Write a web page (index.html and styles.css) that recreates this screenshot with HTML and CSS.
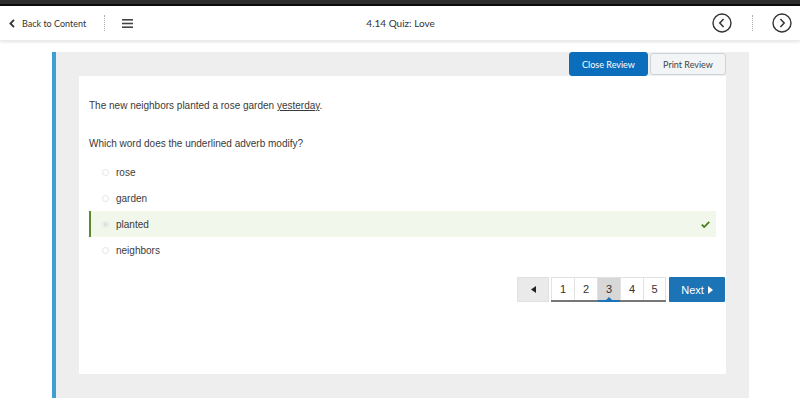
FILE: index.html
```html
<!DOCTYPE html>
<html>
<head>
<meta charset="utf-8">
<link rel="stylesheet" href="styles.css">
</head>
<body>
<div class="topbar"></div>
<header class="header">
  <div class="back">
    <svg class="chev" width="6" height="9" viewBox="0 0 6 9"><path d="M5 0.8 L1.4 4.5 L5 8.2" fill="none" stroke="#333" stroke-width="1.8"/></svg>
    <span>Back to Content</span>
  </div>
  <div class="sep"></div>
  <svg class="burger" width="11" height="9" viewBox="0 0 11 9"><rect x="0" y="0" width="11" height="1.6" fill="#444"/><rect x="0" y="3.7" width="11" height="1.6" fill="#444"/><rect x="0" y="7.4" width="11" height="1.6" fill="#444"/></svg>
  <div class="title">4.14 Quiz: Love</div>
  <svg class="circ" width="20" height="20" viewBox="0 0 20 20"><circle cx="10" cy="10" r="9" fill="none" stroke="#333" stroke-width="1.4"/><path d="M11.6 6 L7.8 10 L11.6 14" fill="none" stroke="#333" stroke-width="1.5"/></svg>
  <div class="sep sep2"></div>
  <svg class="circ" width="20" height="20" viewBox="0 0 20 20"><circle cx="10" cy="10" r="9" fill="none" stroke="#333" stroke-width="1.4"/><path d="M8.4 6 L12.2 10 L8.4 14" fill="none" stroke="#333" stroke-width="1.5"/></svg>
</header>
<main class="main">
  <section class="panel">
    <div class="tools">
      <button class="btn btn-primary">Close Review</button>
      <button class="btn btn-light">Print Review</button>
    </div>
    <div class="card">
      <p class="prompt">The new neighbors planted a rose garden <u>yesterday</u>.</p>
      <p class="question">Which word does the underlined adverb modify?</p>
      <ul class="options">
        <li class="opt"><span class="radio"></span><span>rose</span></li>
        <li class="opt"><span class="radio"></span><span>garden</span></li>
        <li class="opt sel"><span class="radio on"></span><span>planted</span>
          <svg class="check" width="9" height="7" viewBox="0 0 9 7"><path d="M0.8 3.6 L3.2 6 L8.2 0.8" fill="none" stroke="#4c7d1c" stroke-width="1.8"/></svg>
        </li>
        <li class="opt"><span class="radio"></span><span>neighbors</span></li>
      </ul>
      <nav class="pager">
        <button class="prev"><svg width="5" height="7" viewBox="0 0 5 7"><path d="M5 0 L0 3.5 L5 7 Z" fill="#222"/></svg></button>
        <div class="pages">
          <span class="pg">1</span><span class="pg">2</span><span class="pg cur">3</span><span class="pg">4</span><span class="pg">5</span>
        </div>
        <button class="next">Next <svg width="5" height="8" viewBox="0 0 5 8"><path d="M0 0 L5 4 L0 8 Z" fill="#fff"/></svg></button>
      </nav>
    </div>
  </section>
</main>
</body>
</html>
```
FILE: styles.css
```css
* { box-sizing: border-box; }
html, body { margin: 0; padding: 0; background: #fff; }
body { width: 800px; height: 409px; overflow: hidden; font-family: "Liberation Sans", Arial, sans-serif; color: #3a3a3a; }

.topbar { height: 6px; background: #2e2e2e; border-bottom: 2px solid #0d0d0d; }

.header {
  height: 35px;
  display: flex;
  align-items: center;
  background: #fff;
  box-shadow: 0 1px 3px rgba(0,0,0,0.12);
  border-bottom: 1px solid #ececec;
  font-family: Lato, "Liberation Sans", sans-serif;
  position: relative;
  z-index: 1;
}
.back { display: flex; align-items: center; padding-left: 9px; font-size: 9px; color: #333; }
.chev { margin-right: 7px; }
.sep { width: 0; height: 16px; border-left: 1px dotted #aaa; margin-left: 18px; }
.burger { margin-left: 17px; }
.title { flex: 1; text-align: center; font-size: 10px; color: #333; padding-right: 44px; }
.circ { display: block; }
.sep2 { margin-left: 20px; margin-right: 19px; }
.header .circ:last-child { margin-right: 8px; }

.main { padding-top: 11px; }
.panel {
  margin-left: 52px;
  width: 697px;
  height: 346px;
  background: #eeeeee;
  border-left: 4px solid #3e9fd3;
  padding: 0 23px 24px 23px;
  display: flex;
  flex-direction: column;
}
.tools { display: flex; justify-content: flex-end; gap: 2px; height: 24px; }
.btn {
  font-family: Lato, "Liberation Sans", sans-serif;
  font-size: 9px;
  border-radius: 3px;
  height: 24px;
  padding: 0;
  cursor: pointer;
}
.btn-primary { width: 79px; background: #0b6ebd; color: #fff; border: 1px solid #0b6ebd; }
.btn-light { width: 76px; height: 22px; margin-top: 1px; background: #f2f4f6; color: #444; border: 1px solid #cfd3d7; }

.card {
  flex: 1;
  background: #fff;
  padding: 23px 0 0 10px;
  display: flex;
  flex-direction: column;
}
.prompt { margin: 0; font-size: 10px; line-height: 14px; }
.question { margin: 24px 0 0 0; font-size: 10px; line-height: 14px; }
.options { list-style: none; margin: 8px 0 0 0; padding: 0; }
.opt {
  display: flex;
  align-items: center;
  height: 26px;
  width: 627px;
  font-size: 10px;
  padding-left: 11px;
  border-left: 2px solid transparent;
}
.radio {
  width: 7px; height: 7px;
  border: 1px solid #e3e3e3;
  border-radius: 50%;
  margin-right: 7px;
}
.radio.on { background: radial-gradient(circle, #ddd 1.5px, transparent 2px); }
.sel { background: #f1f7ea; border-left-color: #5a8a2c; }
.check { margin-left: auto; margin-right: 6px; }

.pager { display: flex; justify-content: flex-end; margin-top: 14px; margin-right: 1px; height: 25px; }
.prev {
  width: 32px; height: 25px; background: #eaeaea; border: 1px solid #e0e0e0; padding: 0;
  display: flex; align-items: center; justify-content: center; margin-right: 2px;
}
.pages { display: flex; border-bottom: 2px solid #777; height: 25px; background: #fff; }
.pg {
  width: 23px; height: 23px;
  display: flex; align-items: center; justify-content: center;
  font-size: 11px; color: #333;
  border: 1px solid #e2e2e2; border-right: none; border-bottom: none;
  position: relative;
}
.pg:last-child { border-right: 1px solid #e2e2e2; }
.pg.cur { background: #d7d7d7; }
.pg.cur::after {
  content: ""; position: absolute; left: 0; right: 0; bottom: -2px; height: 2px; background: #1b74b8;
}
.pg.cur::before {
  content: ""; position: absolute; left: 50%; bottom: 0; margin-left: -3px;
  border-left: 3px solid transparent; border-right: 3px solid transparent; border-bottom: 3px solid #1b74b8;
}
.next {
  margin-left: 3px; width: 56px; height: 25px;
  background: #1c74b6; color: #fff; border: none; border-radius: 1px;
  font-family: "Liberation Sans", Arial, sans-serif; font-size: 11px;
  display: flex; align-items: center; justify-content: center; gap: 4px; padding: 0;
}
```
